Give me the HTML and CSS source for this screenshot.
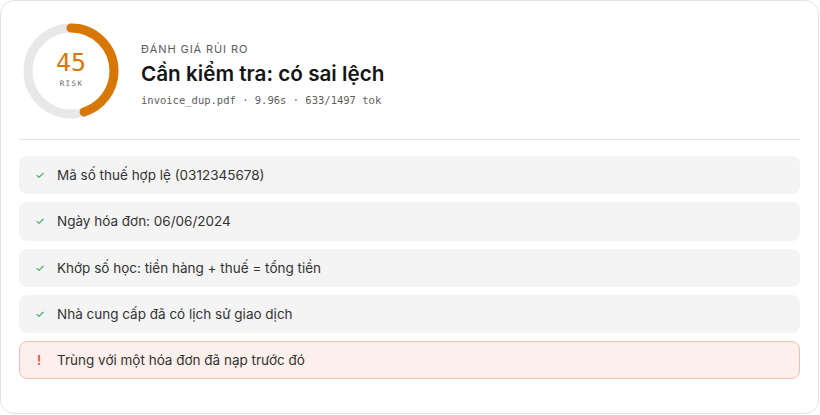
FILE: index.html
```html
<!DOCTYPE html>
<html lang="vi">
<head>
<meta charset="utf-8">
<link rel="stylesheet" href="styles.css">
</head>
<body>
<div class="card">
  <div class="header">
    <div class="gauge">
      <svg class="ring" width="96" height="96" viewBox="0 0 96 96">
        <circle cx="48" cy="48" r="43" fill="none" stroke="#e8e8e8" stroke-width="9"/>
        <circle cx="48" cy="48" r="43" fill="none" stroke="#d97706" stroke-width="9" stroke-linecap="round" stroke-dasharray="121.6 400" transform="rotate(-90 48 48)"/>
      </svg>
      <div class="gauge-text">
        <div class="score">45</div>
        <div class="risk">RISK</div>
      </div>
    </div>
    <div class="info">
      <div class="eyebrow">ĐÁNH GIÁ RỦI RO</div>
      <div class="title">Cần kiểm tra: có sai lệch</div>
      <div class="meta">invoice_dup.pdf · 9.96s · 633/1497 tok</div>
    </div>
  </div>
  <div class="divider"></div>
  <div class="checks">
    <div class="check ok"><span class="icon">✓</span><span>Mã số thuế hợp lệ (0312345678)</span></div>
    <div class="check ok"><span class="icon">✓</span><span>Ngày hóa đơn: 06/06/2024</span></div>
    <div class="check ok"><span class="icon">✓</span><span>Khớp số học: tiền hàng + thuế = tổng tiền</span></div>
    <div class="check ok"><span class="icon">✓</span><span>Nhà cung cấp đã có lịch sử giao dịch</span></div>
    <div class="check warn"><span class="icon">!</span><span>Trùng với một hóa đơn đã nạp trước đó</span></div>
  </div>
</div>
</body>
</html>
```

FILE: styles.css
```css
* { box-sizing: border-box; }
html, body { margin: 0; padding: 0; background: #ffffff; }
body { font-family: Inter, "Noto Sans", sans-serif; color: #1f1f1f; }

.card {
  width: 819px;
  height: 414px;
  margin: 0;
  border: 1px solid #e3e3e3;
  border-radius: 14px;
  padding: 22px 18px 0 18px;
  background: #fff;
}

.header {
  display: flex;
  align-items: center;
  gap: 22px;
  padding-left: 4px;
}

.gauge {
  position: relative;
  width: 96px;
  height: 96px;
  flex: none;
}
.ring { display: block; }
.gauge-text {
  position: absolute;
  inset: 0;
  display: flex;
  flex-direction: column;
  align-items: center;
  justify-content: center;
}
.score {
  font-family: "DejaVu Sans Mono", monospace;
  font-size: 25px;
  font-weight: 400;
  line-height: 26px;
  color: #d97706;
  margin-top: -4px;
}
.risk {
  font-family: "DejaVu Sans Mono", monospace;
  font-size: 7.5px;
  letter-spacing: 1.4px;
  color: #6b6b6b;
  margin-top: 3px;
  padding-left: 1px;
}

.info { display: flex; flex-direction: column; padding-top: 7px; }
.eyebrow {
  font-size: 11px;
  letter-spacing: 0.9px;
  color: #5a5a5a;
  line-height: 14px;
}
.title {
  font-size: 20.7px;
  font-weight: 600;
  color: #151515;
  line-height: 26px;
  margin-top: 5px;
}
.meta {
  font-family: "DejaVu Sans Mono", monospace;
  font-size: 10.5px;
  color: #5e5e5e;
  line-height: 14px;
  margin-top: 6px;
}

.divider {
  height: 1px;
  background: #e3e3e3;
  margin-top: 20px;
}

.checks {
  display: flex;
  flex-direction: column;
  gap: 8px;
  margin-top: 16px;
}
.check {
  display: flex;
  align-items: center;
  height: 38.25px;
  border-radius: 8px;
  background: #f4f4f4;
  padding-left: 16px;
  font-size: 13.5px;
  color: #333;
}
.check .icon {
  width: 22px;
  flex: none;
  font-size: 11px;
}
.check.ok .icon { color: #22a150; }
.check.warn {
  background: #fdf0ec;
  border: 1px solid #f7bcae;
  padding-left: 15px;
}
.check.warn .icon {
  color: #e8513a;
  font-size: 13px;
  font-weight: 600;
  padding-left: 2px;
}
```
